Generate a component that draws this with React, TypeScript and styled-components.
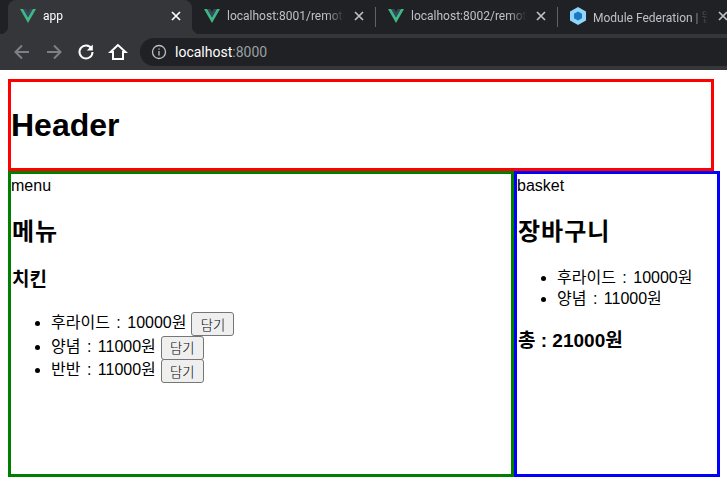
import React from "react";
import styled, { createGlobalStyle } from "styled-components";

const GlobalStyle = createGlobalStyle`
  html, body {
    margin: 0;
    padding: 0;
    background: #fff;
    overflow: hidden;
  }
  body {
    font-family: "Liberation Sans", "Noto Sans CJK KR", sans-serif;
    font-size: 16px;
    color: #000;
  }
`;

const Browser = styled.div`
  background: #202124;
  height: 70px;
  overflow: hidden;
  font-family: Roboto, "Noto Sans CJK KR", sans-serif;
`;

const TabStrip = styled.div`
  display: flex;
  height: 34px;
  padding-left: 8px;
`;

const Tab = styled.div<{ $active?: boolean; $width: number }>`
  position: relative;
  display: flex;
  align-items: center;
  flex: none;
  width: ${(p) => p.$width}px;
  height: 34px;
  box-sizing: border-box;
  padding: 0 8px 2px 12px;
  gap: 7px;
  font-size: 12px;
  border-radius: 8px 8px 0 0;
  background: ${(p) => (p.$active ? "#35363a" : "transparent")};
  color: ${(p) => (p.$active ? "#fff" : "#bdc1c6")};

  ${(p) =>
    p.$active &&
    `
    &::before, &::after {
      content: "";
      position: absolute;
      bottom: 0;
      width: 8px;
      height: 8px;
    }
    &::before {
      left: -8px;
      background: radial-gradient(circle at 0 0, #202124 8px, #35363a 8.5px);
    }
    &::after {
      right: -8px;
      background: radial-gradient(circle at 100% 0, #202124 8px, #35363a 8.5px);
    }
  `}
`;

const TabTitle = styled.span`
  flex: 1;
  min-width: 0;
  white-space: nowrap;
  -webkit-mask-image: linear-gradient(to right, #000 85%, transparent 100%);
  mask-image: linear-gradient(to right, #000 85%, transparent 100%);
`;

const Divider = styled.div`
  flex: none;
  width: 1px;
  height: 20px;
  margin-top: 7px;
  background: #5f6368;
`;

const Toolbar = styled.div`
  display: flex;
  align-items: center;
  height: 36px;
  background: #35363a;
  padding-left: 12px;
`;

const NavIcon = styled.svg`
  flex: none;
  width: 20px;
  height: 20px;
  margin-right: 12px;
`;

const UrlBar = styled.div`
  flex: 1;
  display: flex;
  align-items: center;
  height: 28px;
  padding-left: 11px;
  gap: 8px;
  border-radius: 14px 0 0 14px;
  background: #202124;
  font-size: 14px;
  color: #9aa0a6;
`;

const Host = styled.span`
  color: #fff;
`;

const Page = styled.div`
  padding: 9px 7px 0 8px;
`;

const Header = styled.header`
  box-sizing: border-box;
  width: 706px;
  height: 92px;
  display: flex;
  align-items: center;
  padding-top: 1px;
  border: 3px solid red;
`;

const HeaderTitle = styled.h1`
  margin: 0;
  font-size: 32px;
  font-weight: 700;
`;

const Columns = styled.div`
  display: flex;
`;

const Panel = styled.section<{ $color: string; $width: number }>`
  box-sizing: border-box;
  width: ${(p) => p.$width}px;
  height: 306px;
  padding-top: 1px;
  border: 3px solid ${(p) => p.$color};
  line-height: 21px;
`;

const Heading2 = styled.h2`
  margin: 19px 0 0 1px;
  font-size: 24px;
  line-height: 33px;
  font-weight: 700;
  letter-spacing: 1px;
`;

const Heading3 = styled.h3`
  margin: 19px 0 0 1px;
  font-size: 19px;
  line-height: 26px;
  font-weight: 700;
`;

const List = styled.ul`
  margin: 19px 0 16px;
  padding-left: 40px;
  word-spacing: 2px;
`;

const Item = styled.li`
  height: 21px;
  white-space: nowrap;
`;

const MenuItem = styled(Item)`
  height: 23.670px;
`;

const AddButton = styled.button`
  font-family: "Noto Sans CJK KR", sans-serif;
  font-size: 13.3px;
  font-weight: 300;
  line-height: 17px;
  height: 24px;
  width: 43px;
  padding: 0;
  margin-left: 5px;
  border: 1px solid #767676;
  border-radius: 3px;
  background: #efefef;
  color: #000;
  vertical-align: top;
`;

const VueLogo = () => (
  <svg width="16" height="14" viewBox="0 0 24 21" style={{ flex: "none" }}>
    <path d="M0 0h4.800L12 12.400 19.200 0H24L12 21z" fill="#41b883" />
    <path d="M4.800 0h4.400L12 5l2.800-5h4.400L12 12.400z" fill="#35495e" />
  </svg>
);

const WebpackLogo = () => (
  <svg width="16" height="18" viewBox="0 0 16 18" style={{ flex: "none" }}>
    <path d="M8 0l8 4.500v9L8 18l-8-4.500v-9z" fill="#8ed6fb" />
    <path d="M8 4.500l4 2.250v4.500L8 13.500l-4-2.250v-4.500z" fill="#1c78c0" />
  </svg>
);

const CloseIcon = () => (
  <svg width="16" height="16" viewBox="0 0 16 16" style={{ flex: "none" }}>
    <path d="M4 4l8 8M12 4l-8 8" stroke="currentColor" strokeWidth="1.7" />
  </svg>
);

const menu = [
  { name: "후라이드", price: 10000 },
  { name: "양념", price: 11000 },
  { name: "반반", price: 11000 },
];

const basket = [
  { name: "후라이드", price: 10000 },
  { name: "양념", price: 11000 },
];

const App: React.FC = () => {
  return (
    <>
      <GlobalStyle />
      <Browser>
        <TabStrip>
          <Tab $active $width={184}>
            <VueLogo />
            <TabTitle>app</TabTitle>
            <CloseIcon />
          </Tab>
          <Tab $width={183}>
            <VueLogo />
            <TabTitle>localhost:8001/remote</TabTitle>
            <CloseIcon />
          </Tab>
          <Divider />
          <Tab $width={181}>
            <VueLogo />
            <TabTitle>localhost:8002/remote</TabTitle>
            <CloseIcon />
          </Tab>
          <Divider />
          <Tab $width={181}>
            <WebpackLogo />
            <TabTitle>Module Federation | 웹</TabTitle>
            <CloseIcon />
          </Tab>
        </TabStrip>
        <Toolbar>
          <NavIcon viewBox="0 0 20 20" fill="none" stroke="#7d8084" strokeWidth="2">
            <path d="M17 10H4M10 3.500L3.500 10l6.500 6.500" />
          </NavIcon>
          <NavIcon viewBox="0 0 20 20" fill="none" stroke="#7d8084" strokeWidth="2">
            <path d="M3 10h13M10 3.500l6.500 6.500-6.500 6.500" />
          </NavIcon>
          <NavIcon viewBox="0 0 20 20" fill="none" stroke="#fff" strokeWidth="2">
            <path d="M15.500 6.500A6.500 6.500 0 1 0 16.500 10" />
            <path d="M16.800 2.500v6h-6z" fill="#fff" stroke="none" />
          </NavIcon>
          <NavIcon viewBox="0 0 20 20" fill="none" stroke="#fff" strokeWidth="2">
            <path d="M10 3L2.500 10H5v7h10v-7h2.500z" />
          </NavIcon>
          <UrlBar>
            <svg width="16" height="16" viewBox="0 0 16 16" fill="none" stroke="#bdc1c6" strokeWidth="1.300">
              <circle cx="8" cy="8" r="6.500" />
              <path d="M8 7v4.500M8 4.500v1.300" />
            </svg>
            <span>
              <Host>localhost</Host>:8000
            </span>
          </UrlBar>
        </Toolbar>
      </Browser>
      <Page>
        <Header>
          <HeaderTitle>Header</HeaderTitle>
        </Header>
        <Columns>
          <Panel $color="green" $width={506}>
            <div>menu</div>
            <Heading2>메뉴</Heading2>
            <Heading3>치킨</Heading3>
            <List>
              {menu.map((item) => (
                <MenuItem key={item.name}>
                  {item.name} : {item.price}원
                  <AddButton>담기</AddButton>
                </MenuItem>
              ))}
            </List>
          </Panel>
          <Panel $color="blue" $width={206}>
            <div>basket</div>
            <Heading2>장바구니</Heading2>
            <List>
              {basket.map((item) => (
                <Item key={item.name}>
                  {item.name} : {item.price}원
                </Item>
              ))}
            </List>
            <Heading3>총 : 21000원</Heading3>
          </Panel>
        </Columns>
      </Page>
    </>
  );
};

export default App;
